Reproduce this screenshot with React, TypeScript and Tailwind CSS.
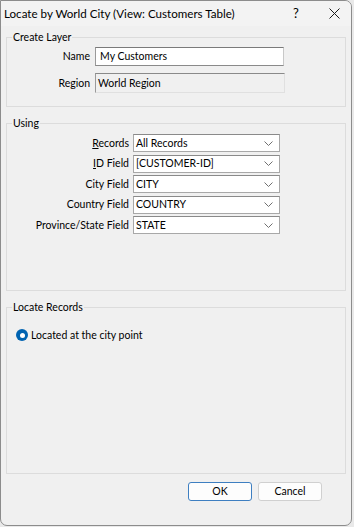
import React from 'react';

const font = "font-['Segoe_UI','Lato','Noto_Sans',sans-serif]";

const Chevron = () => (
  <svg width="9" height="5" viewBox="0 0 9 5" className="shrink-0">
    <path d="M0.5 0.5 L4.5 4.5 L8.5 0.5" fill="none" stroke="#707070" strokeWidth="1" />
  </svg>
);

interface ComboRowProps {
  label: React.ReactNode;
  value: string;
}

const ComboRow: React.FC<ComboRowProps> = ({ label, value }) => (
  <div className="flex items-center h-[18px]">
    <div className="w-[121px] text-right pr-[4px] leading-none">{label}</div>
    <div className="w-[147px] h-[18px] bg-white border border-[#a8a8a8] border-t-[#8a8a8a] flex items-center pl-[2px] pr-[6px]">
      <span className="flex-1 leading-none">{value}</span>
      <Chevron />
    </div>
  </div>
);

export default function App() {
  return (
    <div className={`w-[354px] h-[527px] bg-[#e9e9e9] text-black text-[10.5px] ${font}`}>
      <div className="w-[352px] h-[526px] bg-[#f0f0f0] border border-[#8c8c8c] rounded-b-[7px] rounded-tr-[7px] flex flex-col overflow-hidden">
        {/* title bar */}
        <div className="h-[25px] bg-[#f3f3f3] flex items-center pl-[3px] shrink-0 text-[11.6px]">
          <span className="flex-1 leading-none">Locate by World City (View: Customers Table)</span>
          <span className="w-[20px] text-center text-[13px] leading-none mr-[23px]">?</span>
          <svg width="11" height="11" viewBox="0 0 11 11" className="mr-[11px]">
            <path d="M0.5 0.5 L10.5 10.5 M10.5 0.5 L0.5 10.5" stroke="#1a1a1a" strokeWidth="1" />
          </svg>
        </div>

        {/* Create Layer */}
        <fieldset className="mx-[5px] mt-[4px] h-[77px] border border-[#dcdcdc] pl-[5px] shrink-0">
          <legend className="px-[1px] leading-[15px]">Create Layer</legend>
          <div className="flex items-center mt-[2px] h-[18px]">
            <div className="w-[83px] text-right pr-[5px] leading-none">Name</div>
            <div className="w-[189px] h-[19px] bg-white border border-[#c8c8c8] border-t-[#7a7a7a] border-l-[#9a9a9a] border-b-[#8a8a8a] flex items-center pl-[4px] leading-none">
              My Customers
            </div>
          </div>
          <div className="flex items-center mt-[8px] h-[20px]">
            <div className="w-[83px] text-right pr-[5px] leading-none">Region</div>
            <div className="w-[190px] h-[20px] bg-[#f0f0f0] border border-[#e0e0e0] border-t-[#8a8a8a] border-l-[#9a9a9a] flex items-center pl-[2px] leading-none">
              World Region
            </div>
          </div>
        </fieldset>

        {/* Using */}
        <fieldset className="mx-[5px] mt-[9px] h-[175px] border border-[#dcdcdc] pl-[5px] shrink-0">
          <legend className="px-[1px] leading-[15px]">Using</legend>
          <div className="flex flex-col gap-[2.5px] mt-[3px]">
            <ComboRow label={<><span className="underline">R</span>ecords</>} value="All Records" />
            <ComboRow label={<><span className="underline">I</span>D Field</>} value="[CUSTOMER-ID]" />
            <ComboRow label="City Field" value="CITY" />
            <ComboRow label="Country Field" value="COUNTRY" />
            <ComboRow label="Province/State Field" value="STATE" />
          </div>
        </fieldset>

        {/* Locate Records */}
        <fieldset className="mx-[5px] mt-[9px] h-[174px] border border-[#dcdcdc] pl-[9px] shrink-0">
          <legend className="px-[1px] -ml-[4px] leading-[15px]">Locate Records</legend>
          <div className="flex items-center mt-[14px] gap-[3px]">
            <div className="w-[12px] h-[12px] rounded-full bg-[#0063b1] flex items-center justify-center">
              <div className="w-[5px] h-[5px] rounded-full bg-white" />
            </div>
            <span className="leading-none">Located at the city point</span>
          </div>
        </fieldset>

        {/* buttons */}
        <div className="flex justify-end gap-[6px] mt-[8px] pr-[29px]">
          <button className="w-[64px] h-[19px] bg-[#fdfdfd] border border-[#3e7fc1] rounded-[3px] leading-none">OK</button>
          <button className="w-[64px] h-[19px] bg-[#fdfdfd] border border-[#d0d0d0] rounded-[3px] leading-none">Cancel</button>
        </div>
      </div>
    </div>
  );
}
